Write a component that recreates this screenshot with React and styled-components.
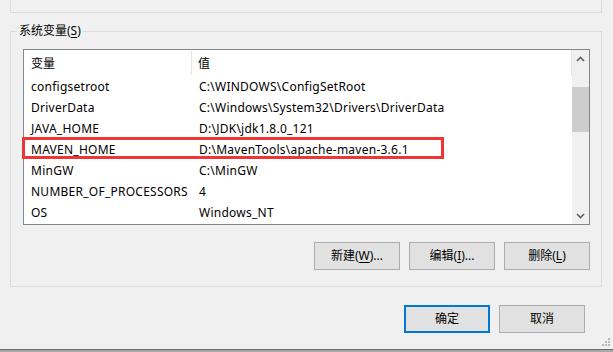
import React from 'react'
import styled, { createGlobalStyle } from 'styled-components'

const GlobalStyle = createGlobalStyle`
  html, body {
    margin: 0;
    padding: 0;
    background: #f0f0f0;
  }
  body {
    width: 613px;
    height: 352px;
    overflow: hidden;
    font-family: 'Noto Sans', 'Noto Sans CJK SC', sans-serif;
    font-size: 12px;
    color: #000;
  }
`

const Window = styled.div`
  width: 613px;
  height: 352px;
  display: flex;
  flex-direction: column;
  background: #f0f0f0;
  position: relative;
`

const Dialog = styled.div`
  flex: 1;
  padding: 0 11px 0 10px;
  display: flex;
  flex-direction: column;
`

const UpperGroup = styled.div`
  height: 12px;
  border: 1px solid #dcdcdc;
  border-top: none;
`

const Group = styled.fieldset`
  margin: 10px 0 0;
  padding: 0 11px 16px 12px;
  border: 1px solid #dcdcdc;
  min-width: 0;
`

const Legend = styled.legend`
  padding: 0 2px;
  margin-left: -6px;
  line-height: 16px;
  font-size: 12px;
`

const Key = styled.span`
  text-decoration: underline;
  text-underline-offset: 2px;
`

const ListBox = styled.div`
  margin-top: 10px;
  height: 176px;
  box-sizing: border-box;
  border: 1px solid #828790;
  background: #fff;
  display: flex;
`

const Table = styled.div`
  flex: 1;
  display: flex;
  flex-direction: column;
`

const HeaderRow = styled.div`
  height: 26px;
  display: grid;
  grid-template-columns: 168px 1fr;
  align-items: center;
  border-right: 1px solid #e5e5e5;
`

const HeaderCell = styled.div`
  height: 24px;
  line-height: 25px;
  padding-left: ${p => p.$pad}px;
  border-right: ${p => (p.$divider ? '1px solid #e5e5e5' : 'none')};
  white-space: nowrap;
`

const Row = styled.div`
  height: 21px;
  display: grid;
  grid-template-columns: 168px 1fr;
  align-items: center;
  position: relative;

  &.marked::after {
    content: '';
    position: absolute;
    left: -2px;
    top: -2px;
    width: 422px;
    height: 22px;
    box-sizing: border-box;
    border: 3px solid #ef3636;
  }
`

const Cell = styled.div`
  padding-left: ${p => p.$pad}px;
  white-space: nowrap;
  overflow: hidden;
  line-height: 21px;
  letter-spacing: 0.25px;
`

const ScrollBar = styled.div`
  width: 17px;
  background: #f0f0f0;
  display: flex;
  flex-direction: column;
`

const Arrow = styled.div`
  height: 17px;
  display: flex;
  align-items: center;
  justify-content: center;
  color: #606060;
`

const Track = styled.div`
  flex: 1;
  display: flex;
  flex-direction: column;
`

const Thumb = styled.div`
  margin-top: 20px;
  height: 45px;
  background: #cdcdcd;
`

const ButtonRow = styled.div`
  display: flex;
  justify-content: flex-end;
  gap: 9px;
  margin-top: ${p => p.$top}px;
  padding-right: ${p => p.$right || 0}px;
`

const Button = styled.button`
  width: 86px;
  height: 28px;
  box-sizing: border-box;
  background: #e1e1e1;
  border: 1px solid #adadad;
  font-family: 'Noto Sans', 'Noto Sans CJK SC', sans-serif;
  font-size: 12px;
  color: #000;
  padding: 0;
  line-height: 1;

  &.primary {
    border: 2px solid #0078d7;
  }
`

const Grip = styled.svg`
  position: absolute;
  right: 2px;
  bottom: 5px;
`

const Footer = styled.div`
  height: 3px;
  border-top: 1px solid #6b6b6b;
  background: #a8a8a8;
  box-sizing: border-box;
`

const vars = [
  ['configsetroot', 'C:\\WINDOWS\\ConfigSetRoot'],
  ['DriverData', 'C:\\Windows\\System32\\Drivers\\DriverData'],
  ['JAVA_HOME', 'D:\\JDK\\jdk1.8.0_121'],
  ['MAVEN_HOME', 'D:\\MavenTools\\apache-maven-3.6.1', true],
  ['MinGW', 'C:\\MinGW'],
  ['NUMBER_OF_PROCESSORS', '4'],
  ['OS', 'Windows_NT'],
]

const App = () => {
  return (
    <Window>
      <GlobalStyle />
      <Dialog>
        <UpperGroup />
        <Group>
          <Legend>
            系统变量(<Key>S</Key>)
          </Legend>
          <ListBox>
            <Table>
              <HeaderRow>
                <HeaderCell $pad={7} $divider>变量</HeaderCell>
                <HeaderCell $pad={6}>值</HeaderCell>
              </HeaderRow>
              {vars.map(([name, value, marked]) => (
                <Row key={name} className={marked ? 'marked' : ''}>
                  <Cell $pad={7}>{name}</Cell>
                  <Cell $pad={7}>{value}</Cell>
                </Row>
              ))}
            </Table>
            <ScrollBar>
              <Arrow>
                <svg width="9" height="6" viewBox="0 0 9 6">
                  <path d="M1 5 L4.5 1.5 L8 5" fill="none" stroke="#606060" strokeWidth="1.6" />
                </svg>
              </Arrow>
              <Track>
                <Thumb />
              </Track>
              <Arrow>
                <svg width="9" height="6" viewBox="0 0 9 6">
                  <path d="M1 1 L4.5 4.5 L8 1" fill="none" stroke="#606060" strokeWidth="1.6" />
                </svg>
              </Arrow>
            </ScrollBar>
          </ListBox>
          <ButtonRow $top={17}>
            <Button>新建(<Key>W</Key>)...</Button>
            <Button>编辑(<Key>I</Key>)...</Button>
            <Button>删除(<Key>L</Key>)</Button>
          </ButtonRow>
        </Group>
        <ButtonRow $top={18} $right={17}>
          <Button className="primary">确定</Button>
          <Button>取消</Button>
        </ButtonRow>
      </Dialog>
      <Grip width="10" height="10" viewBox="0 0 10 10">
        <rect x="7" y="1" width="2" height="2" fill="#b8b8b8" />
        <rect x="4" y="4" width="2" height="2" fill="#b8b8b8" />
        <rect x="7" y="4" width="2" height="2" fill="#b8b8b8" />
        <rect x="1" y="7" width="2" height="2" fill="#b8b8b8" />
        <rect x="4" y="7" width="2" height="2" fill="#b8b8b8" />
        <rect x="7" y="7" width="2" height="2" fill="#b8b8b8" />
      </Grip>
      <Footer />
    </Window>
  )
}

export default App
